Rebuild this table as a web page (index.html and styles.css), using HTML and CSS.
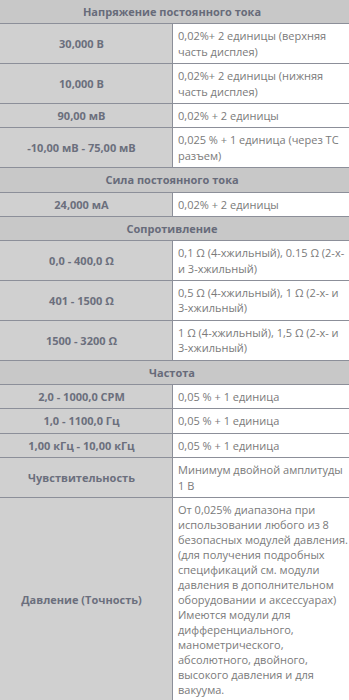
FILE: index.html
```html
<!DOCTYPE html>
<html lang="ru">
<head>
<meta charset="utf-8">
<title>Характеристики</title>
<link rel="stylesheet" href="styles.css">
</head>
<body>
<div class="wrap">
<table class="spec">
  <colgroup><col class="c1"><col class="c2"></colgroup>
  <tr><th colspan="2">Напряжение постоянного тока</th></tr>
  <tr><td class="k">30,000 В</td><td class="v">0,02%+ 2 единицы (верхняя часть дисплея)</td></tr>
  <tr><td class="k">10,000 В</td><td class="v">0,02%+ 2 единицы (нижняя часть дисплея)</td></tr>
  <tr><td class="k">90,00 мВ</td><td class="v">0,02% + 2 единицы</td></tr>
  <tr><td class="k">-10,00 мВ - 75,00 мВ</td><td class="v">0,025 % + 1 единица (через ТС разъем)</td></tr>
  <tr><th colspan="2">Сила постоянного тока</th></tr>
  <tr><td class="k">24,000 мА</td><td class="v">0,02% + 2 единицы</td></tr>
  <tr><th colspan="2">Сопротивление</th></tr>
  <tr><td class="k">0,0 - 400,0 Ω</td><td class="v">0,1 Ω (4-хжильный), 0.15 Ω (2-х- и 3-хжильный)</td></tr>
  <tr><td class="k">401 - 1500 Ω</td><td class="v">0,5 Ω (4-хжильный), 1 Ω (2-х- и 3-хжильный)</td></tr>
  <tr><td class="k">1500 - 3200 Ω</td><td class="v">1 Ω (4-хжильный), 1,5 Ω (2-х- и 3-хжильный)</td></tr>
  <tr><th colspan="2">Частота</th></tr>
  <tr><td class="k">2,0 - 1000,0 CPM</td><td class="v">0,05 % + 1 единица</td></tr>
  <tr><td class="k">1,0 - 1100,0 Гц</td><td class="v">0,05 % + 1 единица</td></tr>
  <tr><td class="k">1,00 кГц - 10,00 кГц</td><td class="v">0,05 % + 1 единица</td></tr>
  <tr><td class="k">Чувствительность</td><td class="v">Минимум двойной амплитуды 1 В</td></tr>
  <tr><td class="k">Давление (Точность)</td><td class="v long">От 0,025% диапазона при использовании любого из 8 безопасных модулей давления. (для получения подробных спецификаций см. модули давления в дополнительном оборудовании и аксессуарах) Имеются модули для дифференциального, манометрического, абсолютного, двойного, высокого давления и для вакуума.</td></tr>
</table>
</div>
</body>
</html>
```

FILE: styles.css
```css
html, body {
  margin: 0;
  padding: 0;
  background: #ffffff;
}
body {
  width: 349px;
  overflow: hidden;
  font-family: "Open Sans", "DejaVu Sans", sans-serif;
  font-size: 11px;
  line-height: 1.4;
}
.wrap {
  margin: -1px 0 0 -10px;
  width: 363px;
}
.spec {
  width: 363px;
  border-collapse: collapse;
  table-layout: fixed;
}
.c1 { width: 182px; }
.c2 { width: 181px; }
.spec th,
.spec td {
  border: 1px solid #8c8f99;
  padding: 4px 5px;
  vertical-align: middle;
}
.spec th {
  background: #c8c8c8;
  color: #676b7a;
  font-weight: 700;
  text-align: center;
}
.spec td.k {
  background: #d0d0d0;
  color: #6b6f7d;
  font-weight: 700;
  text-align: center;
}
.spec td.v {
  background: #ffffff;
  color: #7a7a7a;
  text-align: left;
}
.spec td.long {
  line-height: 15px;
}
```
